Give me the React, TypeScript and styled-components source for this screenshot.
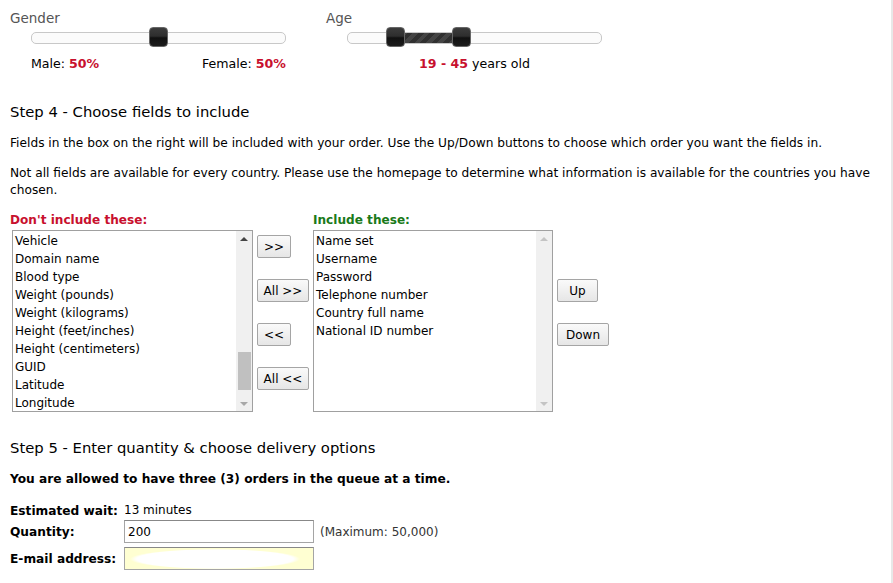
import styled, { createGlobalStyle, css } from "styled-components";

// ----------------------------------------------
//  global
// ----------------------------------------------
const GlobalStyle = createGlobalStyle`
  html, body {
    margin: 0;
    padding: 0;
    background: #fff;
  }
  body {
    font-family: "DejaVu Sans", Verdana, sans-serif;
    font-size: 12px;
    color: #000;
  }
`;

// ----------------------------------------------
//  css mixin
// ----------------------------------------------
const knob = css`
  position: absolute;
  top: -6px;
  width: 19px;
  height: 20px;
  margin-left: -10px;
  box-sizing: border-box;
  border: 1px solid #666;
  border-radius: 4px;
  background: linear-gradient(#3c3c3c 0%, #2e2e2e 45%, #111 55%, #1c1c1c 100%);
`;

const buttonBase = css`
  box-sizing: border-box;
  height: 23px;
  padding: 0;
  border: 1px solid #a5a5a5;
  border-radius: 2px;
  background: linear-gradient(#fafafa, #e6e6e6);
  font-family: "DejaVu Sans", Verdana, sans-serif;
  font-size: 12px;
  white-space: nowrap;
  color: #000;
`;

// ----------------------------------------------
//  styled components
// ----------------------------------------------
const Page = styled.div`
  box-sizing: border-box;
  width: 893px;
  min-height: 583px;
  padding: 10px 0 0 10px;
  border-right: 2px solid #e8e8e8;
`;

const SliderRow = styled.div`
  display: flex;
  gap: 16px;
`;

const SliderGroup = styled.div`
  width: 300px;
`;

const SliderLabel = styled.div`
  font-size: 13.5px;
  color: #555;
  height: 17px;
`;

const Track = styled.div`
  position: relative;
  box-sizing: border-box;
  width: 255px;
  height: 12px;
  margin: 5px 0 0 21px;
  border: 1px solid #c8c8c8;
  border-radius: 5px;
  background: #fbfbfb;
`;

const Knob = styled.div`
  ${knob};
`;

const Range = styled.div`
  position: absolute;
  top: 0;
  height: 10px;
  background: repeating-linear-gradient(
    135deg,
    #303030 0px,
    #303030 4px,
    #444 4px,
    #444 8px
  );
`;

const SliderCaption = styled.div<{ $center?: boolean }>`
  display: flex;
  justify-content: ${(p) => (p.$center ? "center" : "space-between")};
  width: 255px;
  margin: 12px 0 0 21px;
  font-size: 12.6px;
`;

const Red = styled.b`
  color: #c8102e;
  font-weight: 700;
`;

const Heading = styled.h2<{ $top: number }>`
  margin: ${(p) => p.$top}px 0 0;
  font-size: 14.8px;
  font-weight: 400;
  line-height: 18px;
`;

const Para = styled.p<{ $top: number }>`
  margin: ${(p) => p.$top}px 0 0;
  line-height: 17px;
  font-size: 12.2px;
  width: 862px;
`;

const Chooser = styled.div`
  display: flex;
  margin-top: 14px;
`;

const Column = styled.div`
  display: flex;
  flex-direction: column;
`;

const ColTitle = styled.div<{ $color: string }>`
  height: 17px;
  font-size: 12.1px;
  font-weight: 700;
  color: ${(p) => p.$color};
`;

const ListBox = styled.div<{ $inset?: boolean }>`
  display: flex;
  box-sizing: border-box;
  width: ${(p) => (p.$inset ? 241 : 240)}px;
  height: 182px;
  margin-left: ${(p) => (p.$inset ? 2 : 0)}px;
  border: 1px solid #a0a0a0;
  background: #fff;
`;

const Options = styled.div`
  flex: 1;
  padding: 1px 0 0 2px;
  font-size: 12px;
  line-height: 18px;
  overflow: hidden;
`;

const ScrollBar = styled.div`
  display: flex;
  flex-direction: column;
  align-items: center;
  width: 16px;
  background: #f0f0f0;
`;

const Arrow = styled.div<{ $down?: boolean; $disabled?: boolean }>`
  width: 0;
  height: 0;
  margin: ${(p) => (p.$down ? "auto 0 5px" : "6px 0 0")};
  border-left: 4px solid transparent;
  border-right: 4px solid transparent;
  ${(p) =>
    p.$down
      ? `border-top: 4px solid ${p.$disabled ? "#c4c4c4" : "#a8a8a8"};`
      : `border-bottom: 4px solid ${p.$disabled ? "#c4c4c4" : "#444"};`}
`;

const Thumb = styled.div`
  width: 13px;
  height: 38px;
  margin-top: 111px;
  background: #c0c0c0;
`;

const MoveButtons = styled.div`
  display: flex;
  flex-direction: column;
  align-items: flex-start;
  gap: 21px;
  padding: 22px 4px 0;
  width: 52px;
`;

const Btn = styled.button<{ $w: number }>`
  ${buttonBase};
  width: ${(p) => p.$w}px;
`;

const OrderButtons = styled.div`
  display: flex;
  flex-direction: column;
  align-items: flex-start;
  gap: 21px;
  padding: 66px 0 0 4px;
`;

const Strong = styled.p`
  margin: 13px 0 0;
  font-size: 12.2px;
  font-weight: 700;
  line-height: 18px;
`;

const FormGrid = styled.div`
  display: grid;
  grid-template-columns: 114px auto auto;
  grid-template-rows: 11px 23px 23px;
  justify-content: start;
  align-items: center;
  row-gap: 4px;
  margin-top: 17px;
`;

const Label = styled.div`
  font-size: 12.2px;
  font-weight: 700;
`;

const Value = styled.div`
  grid-column: span 2;
  font-size: 12px;
  line-height: 15px;
`;

const Input = styled.input<{ $autofill?: boolean }>`
  box-sizing: border-box;
  width: 190px;
  height: 23px;
  margin: 0;
  padding: 1px 3px;
  border: 1px solid #a5a5a5;
  border-top-color: #888;
  font-family: "DejaVu Sans", Verdana, sans-serif;
  font-size: 12px;
  background: ${(p) =>
    p.$autofill
      ? "radial-gradient(ellipse 85px 10px at 90px 11px, #fff 92%, #ffffd2 100%)"
      : "#fff"};
  outline: none;
`;

const Hint = styled.div`
  padding-left: 6px;
  font-size: 12px;
  color: #333;
`;

// ----------------------------------------------
//  data
// ----------------------------------------------
const available = [
  "Vehicle",
  "Domain name",
  "Blood type",
  "Weight (pounds)",
  "Weight (kilograms)",
  "Height (feet/inches)",
  "Height (centimeters)",
  "GUID",
  "Latitude",
  "Longitude",
];

const included = [
  "Name set",
  "Username",
  "Password",
  "Telephone number",
  "Country full name",
  "National ID number",
];

// ----------------------------------------------
//  function App()
// ----------------------------------------------
export default function App() {
  const ageMin = 19;
  const ageMax = 45;
  return (
    <Page>
      <GlobalStyle />
      <SliderRow>
        <SliderGroup>
          <SliderLabel>Gender</SliderLabel>
          <Track>
            <Knob style={{ left: "50%" }} />
          </Track>
          <SliderCaption>
            <span>
              Male: <Red>50%</Red>
            </span>
            <span>
              Female: <Red>50%</Red>
            </span>
          </SliderCaption>
        </SliderGroup>
        <SliderGroup>
          <SliderLabel>Age</SliderLabel>
          <Track>
            <Range style={{ left: `${ageMin}%`, width: `${ageMax - ageMin}%` }} />
            <Knob style={{ left: `${ageMin}%` }} />
            <Knob style={{ left: `${ageMax}%` }} />
          </Track>
          <SliderCaption $center>
            <span>
              <Red>
                {ageMin} - {ageMax}
              </Red>{" "}
              years old
            </span>
          </SliderCaption>
        </SliderGroup>
      </SliderRow>

      <Heading $top={32}>Step 4 - Choose fields to include</Heading>
      <Para $top={14}>
        Fields in the box on the right will be included with your order. Use the Up/Down
        buttons to choose which order you want the fields in.
      </Para>
      <Para $top={13}>
        Not all fields are available for every country. Please use the homepage to determine
        what information is available for the countries you have chosen.
      </Para>

      <Chooser>
        <Column>
          <ColTitle $color="#c8102e">Don't include these:</ColTitle>
          <ListBox $inset>
            <Options>
              {available.map((f) => (
                <div key={f}>{f}</div>
              ))}
            </Options>
            <ScrollBar>
              <Arrow />
              <Thumb />
              <Arrow $down />
            </ScrollBar>
          </ListBox>
        </Column>
        <MoveButtons>
          <Btn $w={34}>&gt;&gt;</Btn>
          <Btn $w={52}>All &gt;&gt;</Btn>
          <Btn $w={34}>&lt;&lt;</Btn>
          <Btn $w={52}>All &lt;&lt;</Btn>
        </MoveButtons>
        <Column>
          <ColTitle $color="#1a7a1a">Include these:</ColTitle>
          <ListBox>
            <Options>
              {included.map((f) => (
                <div key={f}>{f}</div>
              ))}
            </Options>
            <ScrollBar>
              <Arrow $disabled />
              <Arrow $down $disabled />
            </ScrollBar>
          </ListBox>
        </Column>
        <OrderButtons>
          <Btn $w={41}>Up</Btn>
          <Btn $w={52}>Down</Btn>
        </OrderButtons>
      </Chooser>

      <Heading $top={27}>Step 5 - Enter quantity &amp; choose delivery options</Heading>
      <Strong>You are allowed to have three (3) orders in the queue at a time.</Strong>

      <FormGrid>
        <Label>Estimated wait:</Label>
        <Value>13 minutes</Value>
        <Label>Quantity:</Label>
        <Input defaultValue="200" />
        <Hint>(Maximum: 50,000)</Hint>
        <Label>E-mail address:</Label>
        <Input $autofill defaultValue="" />
        <div />
      </FormGrid>
    </Page>
  );
}
